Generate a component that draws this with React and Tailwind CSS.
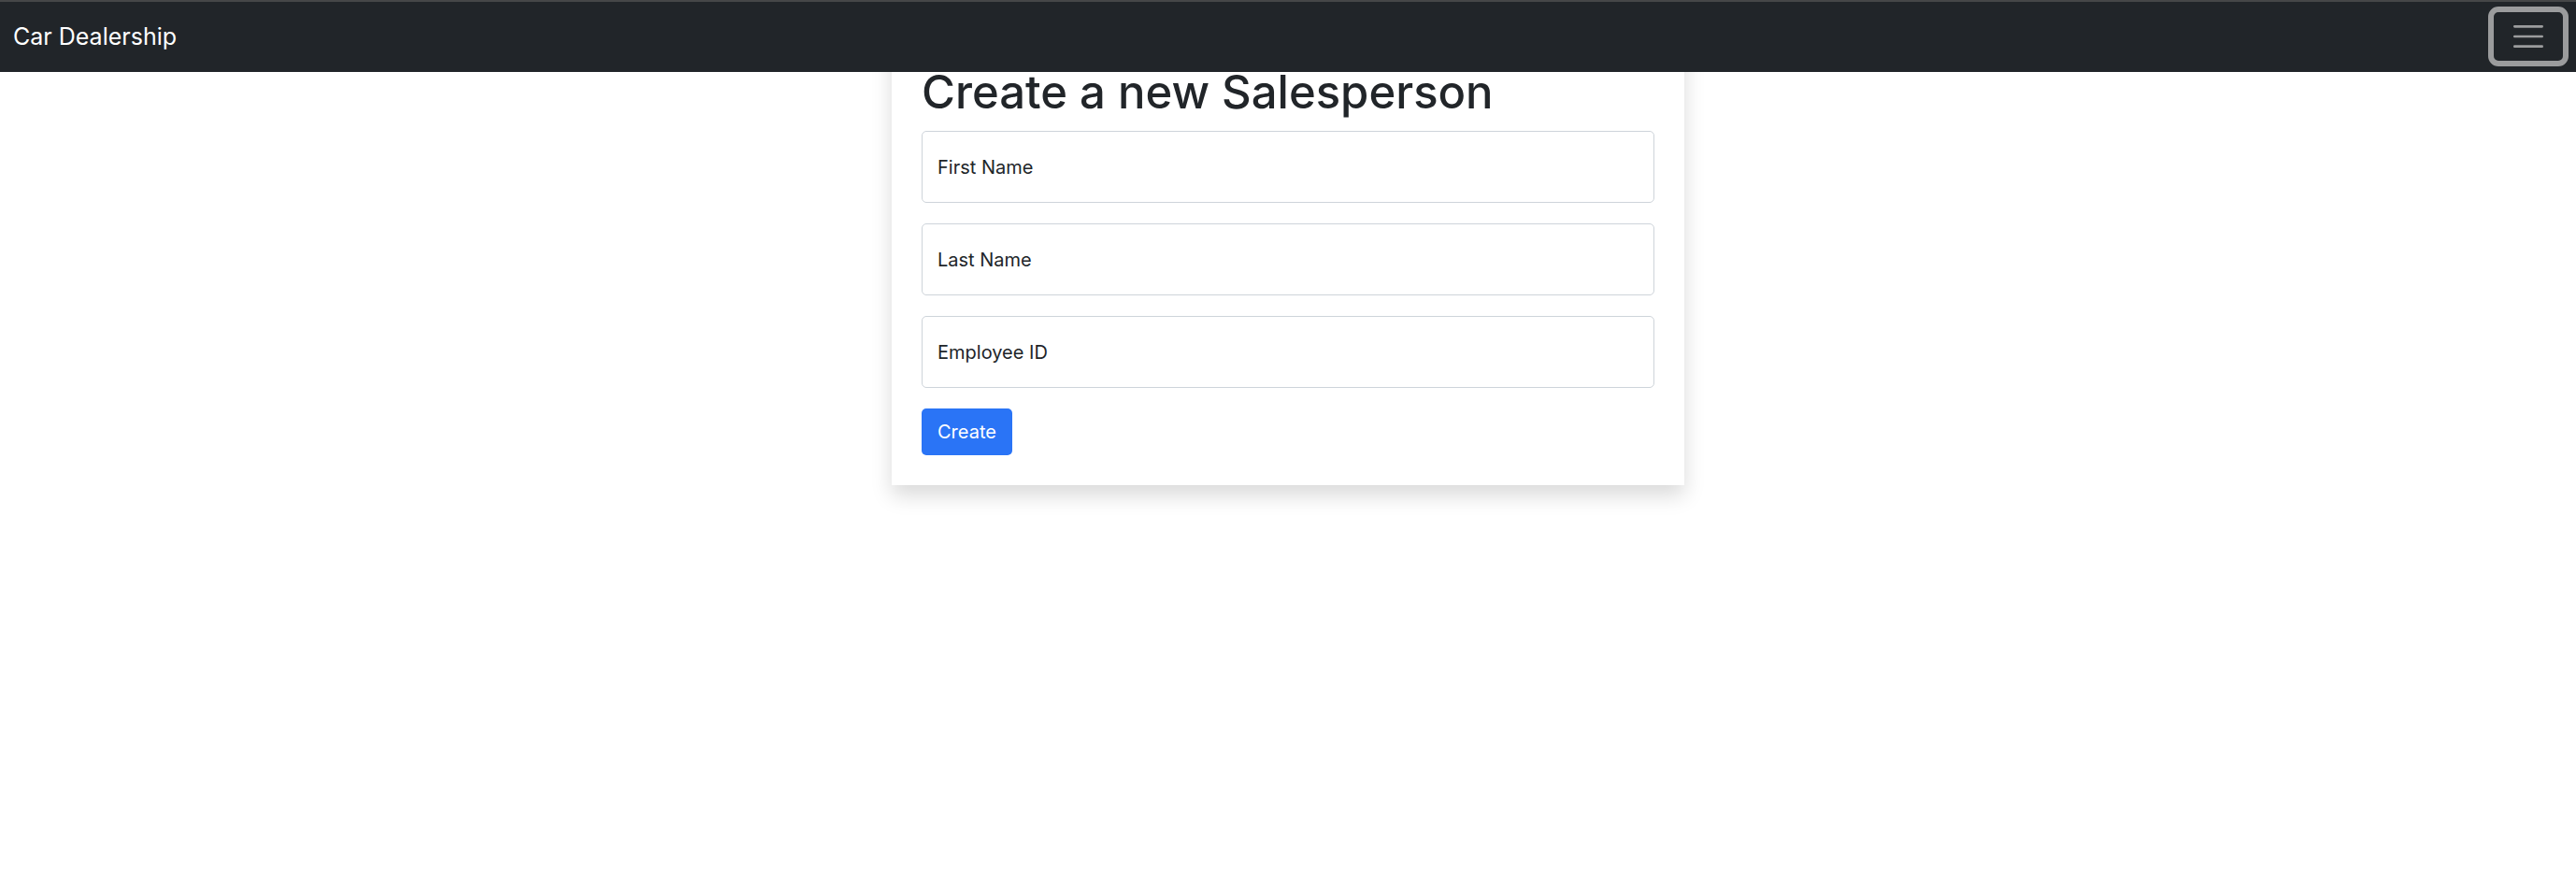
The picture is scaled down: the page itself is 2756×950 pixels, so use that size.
const FIELDS = [
  { id: "first_name", label: "First Name" },
  { id: "last_name", label: "Last Name" },
  { id: "employee_id", label: "Employee ID" },
];

function Navbar() {
  return (
    <nav className="fixed inset-x-0 top-0 z-10 flex h-[77px] items-center justify-between border-t-2 border-[#464748] bg-[#212529] pr-2 pb-px pl-3.5">
      <a href="#" className="text-[25px] leading-10 text-white">
        Car Dealership
      </a>
      <button
        type="button"
        aria-label="Toggle navigation"
        className="flex h-16 w-[86px] items-center justify-center rounded-[11px] border-[6px] border-[#9b9c9d]"
      >
        <svg
          viewBox="0 0 40 40"
          className="size-10"
          fill="none"
          stroke="#9b9c9d"
          strokeWidth="2.67"
          strokeLinecap="round"
        >
          <path d="M5.33 9.33h29.33M5.33 20h29.33M5.33 30.67h29.33" />
        </svg>
      </button>
    </nav>
  );
}

function FloatingField({ id, label }) {
  return (
    <div className="relative mb-[22px]">
      <input
        id={id}
        name={id}
        type="text"
        placeholder=" "
        className="peer block h-[77px] w-full rounded-[5px] border border-[#ced4da] bg-white px-4 pt-6 text-xl text-[#212529] outline-none focus:border-[#86b7fe]"
      />
      <label
        htmlFor={id}
        className="pointer-events-none absolute inset-y-0 left-0 flex items-center px-[17px] text-xl leading-8 peer-focus:items-start peer-focus:text-base peer-[:not(:placeholder-shown)]:items-start peer-[:not(:placeholder-shown)]:text-base"
      >
        {label}
      </label>
    </div>
  );
}

export default function App() {
  return (
    <div className="min-h-screen bg-white font-['Inter','Liberation_Sans',sans-serif] text-[#212529]">
      <Navbar />
      <main className="mx-auto max-w-[848px] pt-[34px]">
        <div className="bg-white p-8 shadow-[0_11px_21px_rgba(0,0,0,0.15)]">
          <h1 className="mb-2 text-[49px] leading-[66px] font-medium">
            Create a new Salesperson
          </h1>
          <form onSubmit={(event) => event.preventDefault()}>
            {FIELDS.map((field) => (
              <FloatingField key={field.id} {...field} />
            ))}
            <button
              type="submit"
              className="flex h-[50px] items-center rounded-[5px] bg-[#2a74f6] px-[17px] text-xl leading-8 text-white"
            >
              Create
            </button>
          </form>
        </div>
      </main>
    </div>
  );
}
